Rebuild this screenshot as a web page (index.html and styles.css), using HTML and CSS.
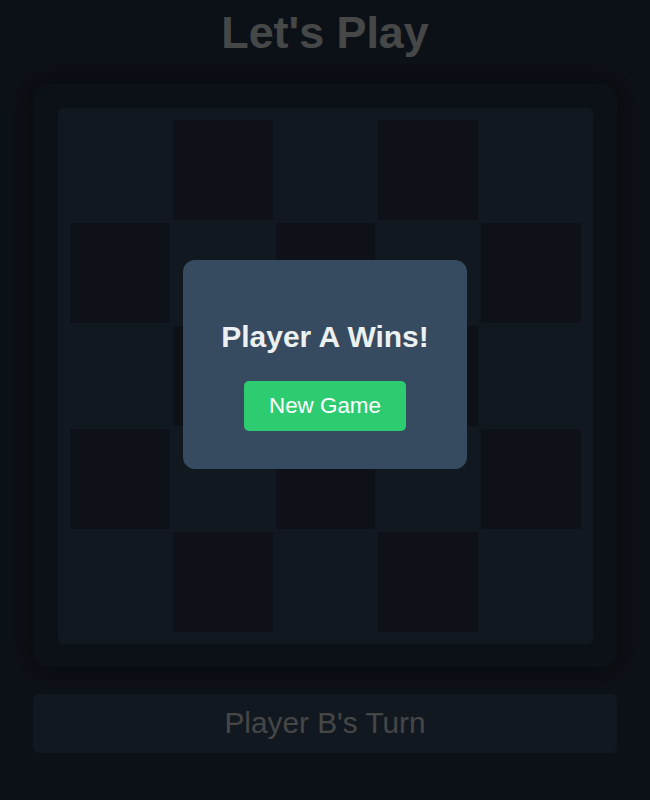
FILE: index.html
```html
<!DOCTYPE html>
<html lang="en">
<head>
<meta charset="utf-8">
<title>Let's Play</title>
<link rel="stylesheet" href="styles.css">
</head>
<body>
<main class="page">
  <h1 class="title">Let's Play</h1>
  <section class="board-wrap">
    <div class="board">
      <div class="cell"></div><div class="cell dark"></div><div class="cell"></div><div class="cell dark"></div><div class="cell"></div>
      <div class="cell dark"></div><div class="cell"></div><div class="cell dark"></div><div class="cell"></div><div class="cell dark"></div>
      <div class="cell"></div><div class="cell dark"></div><div class="cell"></div><div class="cell dark"></div><div class="cell"></div>
      <div class="cell dark"></div><div class="cell"></div><div class="cell dark"></div><div class="cell"></div><div class="cell dark"></div>
      <div class="cell"></div><div class="cell dark"></div><div class="cell"></div><div class="cell dark"></div><div class="cell"></div>
    </div>
  </section>
  <div class="status">Player B's Turn</div>
</main>
<div class="overlay">
  <div class="modal">
    <h2 class="modal-title">Player A Wins!</h2>
    <button class="new-game" type="button">New Game</button>
  </div>
</div>
</body>
</html>
```
FILE: styles.css
```css
* { box-sizing: border-box; }

html, body {
  margin: 0;
  padding: 0;
}

body {
  background: #2b3a4f;
  font-family: "Liberation Sans", Arial, sans-serif;
  color: #ecf0f1;
  min-height: 800px;
}

.page {
  width: 584px;
  margin: 0 auto;
  padding-top: 7px;
  display: flex;
  flex-direction: column;
}

.title {
  margin: 0 0 26px;
  text-align: center;
  font-size: 44.8px;
  font-weight: 700;
  line-height: normal;
  color: #ecf0f1;
}

.board-wrap {
  background: #2b3a4f;
  border-radius: 15px;
  padding: 24px 24px 23px 25px;
  box-shadow: 0 0 26px rgba(0, 0, 0, 0.55);
}

.board {
  background: #3a5068;
  border-radius: 6px;
  padding: 12px;
  display: grid;
  grid-template-columns: repeat(5, 1fr);
  grid-auto-rows: 100px;
  gap: 3px;
}

.cell {
  background: #3a5068;
}

.cell.dark {
  background: #2f3d52;
}

.status {
  margin-top: 27px;
  background: #3a5068;
  border-radius: 6px;
  padding: 12px 12px 13px;
  text-align: center;
  font-size: 29.8px;
  line-height: normal;
  color: #e6eaea;
}

.overlay {
  position: fixed;
  inset: 0;
  background: rgba(0, 0, 0, 0.7);
  display: flex;
  justify-content: center;
  align-items: flex-start;
  padding-top: 260px;
}

.modal {
  background: #364b60;
  border-radius: 12px;
  padding: 36px 38px 38px;
  display: flex;
  flex-direction: column;
  align-items: center;
}

.modal-title {
  margin: 24px 0 27px;
  font-size: 30px;
  font-weight: 700;
  line-height: normal;
  color: #ecf0f1;
}

.new-game {
  font-family: "Liberation Sans", Arial, sans-serif;
  font-size: 22.4px;
  line-height: normal;
  color: #ffffff;
  background: #2ecc71;
  border: none;
  border-radius: 5px;
  padding: 12px 25px;
  cursor: pointer;
}
```
